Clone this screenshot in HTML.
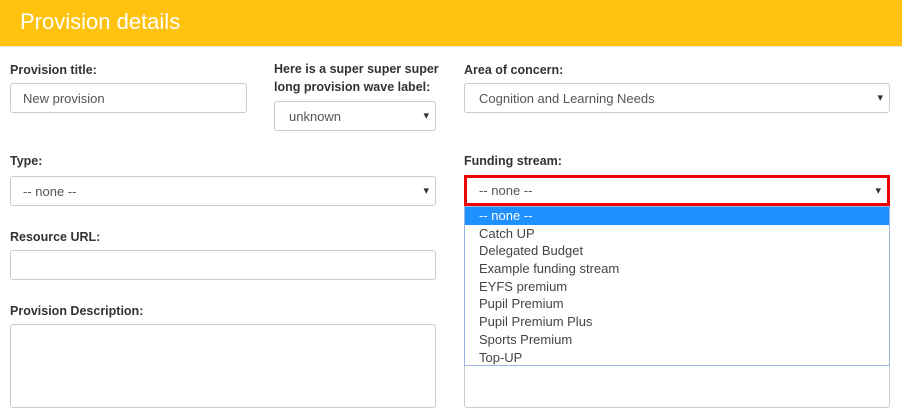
<!DOCTYPE html><html><head><style>
body{margin:0;width:902px;height:418px;background:#fff;font-family:"Liberation Sans",sans-serif;position:relative;overflow:hidden}
.a{position:absolute}
.h{left:0;top:0;width:902px;height:46px;background:#FFC20E;border-bottom:1px solid #e6e6e6}
.h span{position:absolute;left:20px;top:9px;font-size:22px;color:#fff}
.l{font-size:12.5px;font-weight:bold;color:#333;line-height:18px}
.f{border:1px solid #ccc;border-radius:3px;box-sizing:border-box;font-size:13px;color:#555;padding-left:12px;display:flex;align-items:center;background:#fff}
.s::after{content:"▾";position:absolute;right:6px;top:50%;transform:translateY(-55%);font-size:11px;color:#333}
.d{left:464px;top:206px;width:426px;height:160px;border:1px solid #9ab6e0;box-sizing:border-box;background:#fff;font-size:13px;color:#444}
.d div{height:17.7px;line-height:18px;padding-left:14px}
</style></head><body>
<div class="a h"><span>Provision details</span></div>
<div class="a l" style="left:10px;top:61px">Provision title:</div>
<div class="a f" style="left:10px;top:83px;width:237px;height:30px">New provision</div>
<div class="a l" style="left:274px;top:60px">Here is a super super super<br>long provision wave label:</div>
<div class="a f s" style="left:274px;top:101px;width:162px;height:30px;padding-left:14px">unknown</div>
<div class="a l" style="left:464px;top:61px">Area of concern:</div>
<div class="a f s" style="left:464px;top:83px;width:426px;height:30px;padding-left:14px">Cognition and Learning Needs</div>
<div class="a l" style="left:10px;top:152px">Type:</div>
<div class="a f s" style="left:10px;top:176px;width:426px;height:30px">-- none --</div>
<div class="a l" style="left:464px;top:152px">Funding stream:</div>
<div class="a f" style="left:464px;top:324px;width:426px;height:84px"></div>
<div class="a f s" style="left:464px;top:175px;width:426px;height:31px;border:3px solid #e00;border-radius:0;padding-left:12px">-- none --</div>
<div class="a d"><div style="background:#1E90FF;color:#fff">-- none --</div><div>Catch UP</div><div>Delegated Budget</div><div>Example funding stream</div><div>EYFS premium</div><div>Pupil Premium</div><div>Pupil Premium Plus</div><div>Sports Premium</div><div>Top-UP</div></div>
<div class="a l" style="left:10px;top:228px">Resource URL:</div>
<div class="a f" style="left:10px;top:250px;width:426px;height:30px"></div>
<div class="a l" style="left:10px;top:302px">Provision Description:</div>
<div class="a f" style="left:10px;top:324px;width:426px;height:84px"></div>
</body></html>
